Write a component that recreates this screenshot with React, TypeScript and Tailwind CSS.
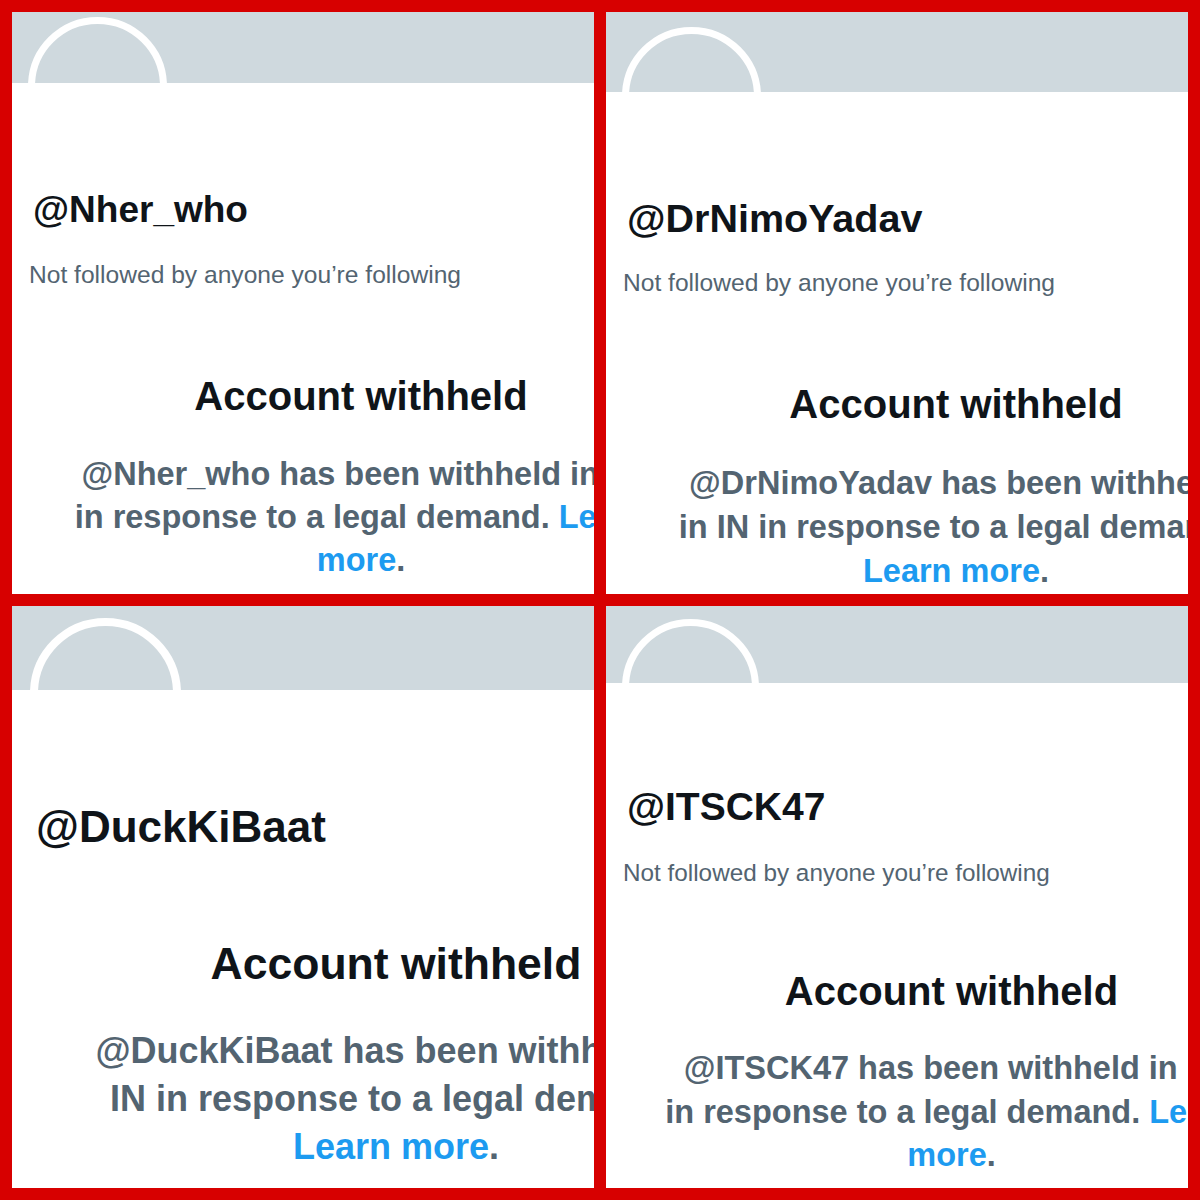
import React from "react";

type PanelCfg = {
  banner: string;
  avatar: string;
  handle: string;
  handleCls: string;
  sub?: string;
  account: string;
  col: string;
  body: string;
  lines: React.ReactNode[];
};

const Blue = ({ children }: { children: React.ReactNode }) => (
  <span className="text-[#1d9bf0]">{children}</span>
);

const panels: PanelCfg[] = [
  {
    banner: "h-[71px]",
    avatar: "ml-[16px] mt-[5px] w-[139px] h-[139px] border-[7px]",
    handle: "@Nher_who",
    handleCls: "mt-[105px] ml-[21px] text-[37px] leading-[44px]",
    sub: "mt-[27px] ml-[17px] text-[24.6px] leading-[32px]",
    account: "mt-[81px] text-[40px] leading-[48px]",
    col: "w-[698px]",
    body: "mt-[33px] text-[32.5px] leading-[43px]",
    lines: [
      "@Nher_who has been withheld in IN",
      <>
        in response to a legal demand. <Blue>Learn</Blue>
      </>,
      <>
        <Blue>more</Blue>.
      </>,
    ],
  },
  {
    banner: "h-[80px]",
    avatar: "ml-[16px] mt-[15px] w-[139px] h-[139px] border-[7px]",
    handle: "@DrNimoYadav",
    handleCls: "mt-[104px] ml-[21px] text-[39.5px] leading-[44px]",
    sub: "mt-[27px] ml-[17px] text-[24.6px] leading-[32px]",
    account: "mt-[81px] text-[40px] leading-[48px]",
    col: "w-[700px]",
    body: "mt-[33px] text-[32.5px] leading-[44px]",
    lines: [
      "@DrNimoYadav has been withheld",
      "in IN in response to a legal demand.",
      <>
        <Blue>Learn more</Blue>.
      </>,
    ],
  },
  {
    banner: "h-[84px]",
    avatar: "ml-[18px] mt-[12px] w-[151px] h-[151px] border-[8px]",
    handle: "@DuckKiBaat",
    handleCls: "mt-[111px] ml-[24px] text-[44px] leading-[52px]",
    account: "mt-[85px] text-[44.5px] leading-[52px]",
    col: "w-[768px]",
    body: "mt-[37px] text-[36px] leading-[48px]",
    lines: [
      "@DuckKiBaat has been withheld in",
      "IN in response to a legal demand.",
      <>
        <Blue>Learn more</Blue>.
      </>,
    ],
  },
  {
    banner: "h-[77px]",
    avatar: "ml-[16px] mt-[13px] w-[137px] h-[137px] border-[7px]",
    handle: "@ITSCK47",
    handleCls: "mt-[102px] ml-[21px] text-[39px] leading-[44px]",
    sub: "mt-[28px] ml-[17px] text-[24.3px] leading-[32px]",
    account: "mt-[78px] text-[40px] leading-[48px]",
    col: "w-[691px]",
    body: "mt-[32px] text-[32.5px] leading-[43.5px]",
    lines: [
      "@ITSCK47 has been withheld in IN",
      <>
        in response to a legal demand. <Blue>Learn</Blue>
      </>,
      <>
        <Blue>more</Blue>.
      </>,
    ],
  },
];

function Panel({ p }: { p: PanelCfg }) {
  return (
    <div className="bg-white overflow-hidden">
      <div className={`bg-[#cfd9de] overflow-hidden ${p.banner}`}>
        <div className={`rounded-full border-white bg-[#cfd9de] ${p.avatar}`} />
      </div>
      <div className={`font-bold text-[#0f1419] whitespace-pre ${p.handleCls}`}>{p.handle}</div>
      {p.sub && (
        <div className={`text-[#536471] whitespace-pre ${p.sub}`}>
          Not followed by anyone you’re following
        </div>
      )}
      <div className={`font-bold text-[#0f1419] text-center whitespace-pre ${p.col} ${p.account}`}>
        Account withheld
      </div>
      <div className={`font-bold text-[#536471] text-center ${p.col} ${p.body}`}>
        {p.lines.map((l, i) => (
          <div key={i} className="whitespace-pre">
            {l}
          </div>
        ))}
      </div>
    </div>
  );
}

export default function App() {
  return (
    <div className="w-[1200px] h-[1200px] bg-[#d70000] p-[12px] grid grid-cols-2 grid-rows-2 gap-[12px] font-['Liberation_Sans',Arial,sans-serif]">
      {panels.map((p, i) => (
        <Panel key={i} p={p} />
      ))}
    </div>
  );
}
